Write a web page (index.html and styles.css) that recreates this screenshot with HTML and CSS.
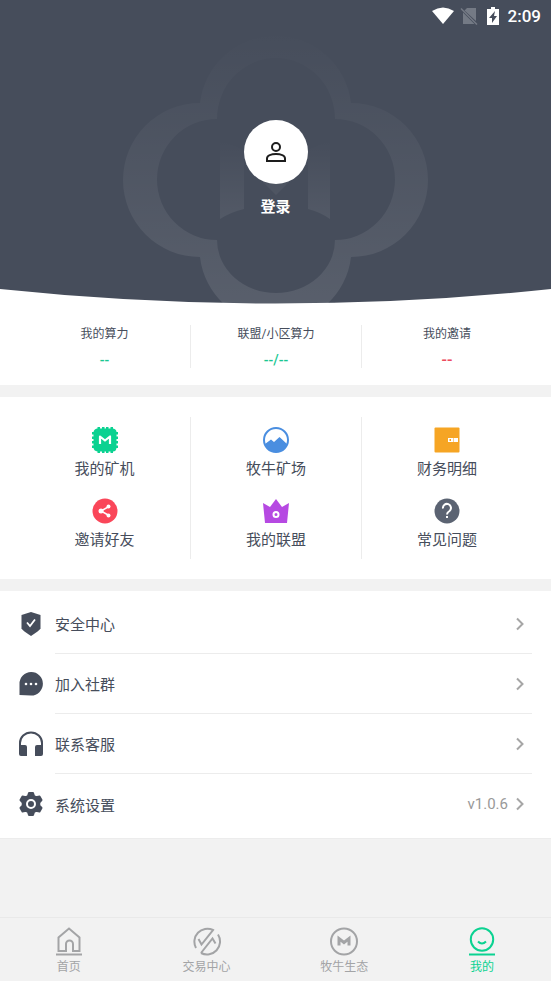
FILE: index.html
```html
<!DOCTYPE html>
<html lang="zh-CN">
<head>
<meta charset="utf-8">
<meta name="viewport" content="width=device-width, initial-scale=1">
<title>我的</title>
<link rel="stylesheet" href="styles.css">
</head>
<body>
<div class="app">
  <header class="hero">
    <svg class="hero-mark" viewBox="0 0 551 304" preserveAspectRatio="xMidYMin slice" aria-hidden="true">
      <defs>
        <linearGradient id="ring" gradientUnits="userSpaceOnUse" x1="0" y1="27" x2="0" y2="304">
          <stop offset="0" stop-color="#fff" stop-opacity="0"/>
          <stop offset="1" stop-color="#fff" stop-opacity=".1"/>
        </linearGradient>
        <linearGradient id="bars" gradientUnits="userSpaceOnUse" x1="0" y1="140" x2="0" y2="219">
          <stop offset="0" stop-color="#fff" stop-opacity="0"/>
          <stop offset="1" stop-color="#fff" stop-opacity=".07"/>
        </linearGradient>
      </defs>
      <path fill="url(#ring)" fill-rule="evenodd" d="M200 103A77 77 0 0 0 200 257A76 76 0 0 0 351 257A77 77 0 0 0 351 103A76 76 0 0 0 200 103ZM217 119A60 60.500 0 0 0 217 240A59 53 0 0 0 335 240A60 60.500 0 0 0 335 119A59 61 0 0 0 217 119Z"/>
      <path fill="url(#bars)" d="M220 140L244 150V209Q231 212 220 219ZM330 140L308 150V209Q320 212 330 219ZM262 181H290L276 195Z"/>
    </svg>
    <svg class="hero-curve" viewBox="0 0 551 15" preserveAspectRatio="none" aria-hidden="true"><path fill="#fff" d="M0 0Q275.500 29 551 0V15H0Z"/></svg>
    <div class="status">
      <svg width="22" height="18" viewBox="0 0 22 18" aria-hidden="true"><path fill="#fff" d="M0 4Q11-3 22 4L11 17Z"/></svg>
      <svg class="nosim" width="18" height="18" viewBox="0 0 18 18" aria-hidden="true"><path fill="#747a85" d="M7 1H16V14L4.500 3.500ZM3 5.500L14.500 17H3Z"/><path stroke="#747a85" stroke-width="1.500" d="M1 1.500L17 17.500"/></svg>
      <svg width="12" height="18" viewBox="0 0 12 18" aria-hidden="true"><path fill="#fff" fill-rule="evenodd" d="M4 0H8V2H12V18H0V2H4ZM8 4L2 11H5V16L10 9H7Z"/></svg>
      <span class="clock">2:09</span>
    </div>
    <button class="login" type="button">
      <span class="avatar">
        <svg width="20" height="20" viewBox="0 0 20 20" fill="none" stroke="#1d1d1d" stroke-width="2" aria-hidden="true"><circle cx="10" cy="5" r="4"/><path d="M1 19V16.500C1 13.500 5.500 12 10 12S19 13.500 19 16.500V19Z"/></svg>
      </span>
      <span>登录</span>
    </button>
  </header>

  <main>
    <section class="stats">
      <div class="stat"><span>我的算力</span><strong>--</strong></div>
      <div class="stat"><span>联盟/小区算力</span><strong>--/--</strong></div>
      <div class="stat"><span>我的邀请</span><strong class="red">--</strong></div>
    </section>

    <nav class="grid" aria-label="功能">
      <div class="col">
        <a href="#miner"><svg width="26" height="26" viewBox="0 0 26 26" aria-hidden="true"><path fill="#0bd291" d="M5 1.500H5.500V0H8V1.500H10V0H12.500V1.500H14V0H16.500V1.500H18.500V0H21V1.500Q24.500 2 24.500 5H26V7.500H24.500V9.500H26V12H24.500V14H26V16.500H24.500V18.500H26V21H24.500Q24 24.500 21 24.500V26H18.500V24.500H16.500V26H14V24.500H12.500V26H10V24.500H8V26H5.500V24.500Q2 24 1.500 21H0V18.500H1.500V16.500H0V14H1.500V12H0V9.500H1.500V7.500H0V5H1.500Q2 2 5 1.500Z"/><path fill="none" stroke="#fff" stroke-width="2.200" stroke-linejoin="round" d="M8 17V9.500L13 13.500L18 9.500V17"/></svg><span>我的矿机</span></a>
        <a href="#invite"><svg width="26" height="26" viewBox="0 0 26 26" aria-hidden="true"><circle cx="13" cy="13" r="12.500" fill="#fa4659"/><path stroke="#fff" stroke-width="1.500" fill="none" d="M17 8.500L9 13L17 17.500"/><circle cx="9" cy="13" r="2.500" fill="#fff"/><circle cx="16.500" cy="8.500" r="2" fill="#fff"/><circle cx="16.500" cy="17.500" r="2" fill="#fff"/></svg><span>邀请好友</span></a>
      </div>
      <div class="col">
        <a href="#field"><svg width="26" height="26" viewBox="0 0 26 26" aria-hidden="true"><circle cx="13" cy="13" r="12" fill="#fff" stroke="#4a8ee0" stroke-width="2"/><path fill="#4a8ee0" d="M2 17L8 12.500L11 15L16.500 10L24 17Q21 25 13 25T2 17Z"/></svg><span>牧牛矿场</span></a>
        <a href="#union"><svg width="26" height="26" viewBox="0 0 26 26" aria-hidden="true"><path fill="#b649e2" d="M0 5L7 9L13 1L19 9L26 5L24 25H2Z"/><circle cx="13" cy="16.500" r="2.500" fill="none" stroke="#fff" stroke-width="2"/></svg><span>我的联盟</span></a>
      </div>
      <div class="col">
        <a href="#finance"><svg width="26" height="26" viewBox="0 0 26 26" aria-hidden="true"><rect x=".5" y=".5" width="25" height="25" rx="1" fill="#f6a524"/><path fill="#fff" d="M14 11H24V15H14Z"/><path fill="#f6a524" d="M15.500 12H17V14H15.500ZM19 11H19.500V15H19Z"/></svg><span>财务明细</span></a>
        <a href="#faq"><svg width="26" height="26" viewBox="0 0 26 26" aria-hidden="true"><circle cx="13" cy="13" r="12.500" fill="#5b6372"/><path fill="none" stroke="#fff" stroke-width="2" d="M9 10.500A4 4 0 1 1 15.500 13C13.500 14.200 13 15 13 16.500"/><path fill="#fff" d="M12 18H14V20H12Z"/></svg><span>常见问题</span></a>
      </div>
    </nav>

    <nav class="list" aria-label="设置">
      <a class="row" href="#security">
        <svg width="26" height="26" viewBox="0 0 26 26" aria-hidden="true"><path fill="#464d5b" d="M13 1L22.500 4V17.500Q22 19 13 25Q4 19 3.500 17.500V4Z"/><path fill="none" stroke="#fff" stroke-width="1.800" d="M9 11.500L12 15L17 8.500"/></svg>
        <span class="body"><span>安全中心</span><svg class="chev" width="8" height="14" viewBox="0 0 8 14" aria-hidden="true"><path d="M1 1.500L6.500 7L1 12.500"/></svg></span>
      </a>
      <a class="row" href="#group">
        <svg width="26" height="26" viewBox="0 0 26 26" aria-hidden="true"><path fill="#464d5b" d="M1.500 24V13A11.700 11.700 0 1 1 13 24.500Z"/><g fill="#fff"><circle cx="8" cy="13" r="1.300"/><circle cx="13" cy="13" r="1.300"/><circle cx="18" cy="13" r="1.300"/></g></svg>
        <span class="body"><span>加入社群</span><svg class="chev" width="8" height="14" viewBox="0 0 8 14" aria-hidden="true"><path d="M1 1.500L6.500 7L1 12.500"/></svg></span>
      </a>
      <a class="row" href="#service">
        <svg width="26" height="26" viewBox="0 0 26 26" aria-hidden="true"><path fill="none" stroke="#464d5b" stroke-width="2" d="M2 20V12A11 10.500 0 0 1 24 12V20"/><path fill="#464d5b" d="M1 14H7Q9 14 9 16V25H3Q1 25 1 23ZM25 14H19Q17 14 17 16V25H23Q25 25 25 23Z"/></svg>
        <span class="body"><span>联系客服</span><svg class="chev" width="8" height="14" viewBox="0 0 8 14" aria-hidden="true"><path d="M1 1.500L6.500 7L1 12.500"/></svg></span>
      </a>
      <a class="row" href="#settings">
        <svg width="26" height="26" viewBox="0 0 26 26" aria-hidden="true"><path fill="#464d5b" stroke="#464d5b" stroke-width="2" stroke-linejoin="round" d="M11 2H15L16 5L18 6.200L21.500 5.500L23.500 9L21.300 11.500V14.500L23.500 17L21.500 20.500L18 19.800L16 21L15 24H11L10 21L8 19.800L4.500 20.500L2.500 17L4.700 14.500V11.500L2.500 9L4.500 5.500L8 6.200L10 5Z"/><circle cx="13" cy="13" r="4" fill="none" stroke="#fff" stroke-width="2"/></svg>
        <span class="body"><span>系统设置</span><span class="version">v1.0.6</span><svg class="chev" width="8" height="14" viewBox="0 0 8 14" aria-hidden="true"><path d="M1 1.500L6.500 7L1 12.500"/></svg></span>
      </a>
    </nav>
  </main>

  <nav class="tabs" aria-label="主导航">
    <a href="#home"><svg width="30" height="30" viewBox="0 0 30 30" aria-hidden="true"><path d="M4.500 25V11.500L15 2.500L25.500 11.500V25H19V18A3.500 3.500 0 0 0 12 18V25ZM2 28.500H28"/></svg><span>首页</span></a>
    <a href="#trade"><svg width="30" height="30" viewBox="0 0 30 30" aria-hidden="true"><path d="M4 22A13 13 0 0 1 21 4L9.500 18.500L6.500 13M9 27L20.500 12.500L23.500 17.500M9 27A13 13 0 0 0 26 8.500"/></svg><span>交易中心</span></a>
    <a href="#eco"><svg width="30" height="30" viewBox="0 0 30 30" aria-hidden="true"><circle cx="15" cy="15.500" r="13"/><path class="bold" d="M10 19.500V12.500L15 16.500L20 12.500V19.500"/></svg><span>牧牛生态</span></a>
    <a class="on" href="#me" aria-current="page"><svg width="30" height="30" viewBox="0 0 30 30" aria-hidden="true"><circle cx="15" cy="13.500" r="11.200"/><path d="M11 15.500Q15 19.500 19 15.500M2 28.500H28"/></svg><span>我的</span></a>
  </nav>
</div>
</body>
</html>
```

FILE: styles.css
```css
* {
  box-sizing: border-box;
}

body {
  margin: 0;
  background: #f2f2f2;
  color: #464d5b;
  font-family: Roboto, "Noto Sans CJK SC", sans-serif;
  font-size: 15px;
}

a {
  color: inherit;
  text-decoration: none;
}

svg {
  display: block;
  flex: none;
}

.app {
  display: flex;
  flex-direction: column;
  min-height: 100vh;
}

main {
  flex: 1;
}

.hero {
  position: relative;
  display: flex;
  flex-direction: column;
  align-items: center;
  height: 304px;
  background: #464d5b;
  color: #fff;
}

.hero-mark {
  position: absolute;
  inset: 0;
  width: 100%;
  height: 100%;
}

.hero-curve {
  position: absolute;
  left: 0;
  bottom: 0;
  width: 100%;
  height: 15px;
}

.status {
  position: relative;
  display: flex;
  align-self: stretch;
  align-items: center;
  justify-content: flex-end;
  height: 31px;
  padding-right: 10px;
}

.nosim {
  margin: 0 9px 0 6px;
}

.clock {
  margin-left: 9px;
  font-size: 17px;
  font-weight: 500;
}

.login {
  position: relative;
  display: flex;
  flex-direction: column;
  align-items: center;
  gap: 12px;
  margin-top: 89px;
  padding: 0;
  border: 0;
  background: none;
  color: #fff;
  font: bold 15px/22px Roboto, "Noto Sans CJK SC", sans-serif;
}

.avatar {
  display: grid;
  place-items: center;
  width: 64px;
  height: 64px;
  border-radius: 50%;
  background: #fff;
}

.stats,
.grid {
  display: grid;
  grid-template-columns: repeat(3, 1fr);
  margin-bottom: 12px;
  background: #fff;
}

.stats {
  padding: 21px 19px 17px;
}

.stat {
  display: flex;
  flex-direction: column;
  align-items: center;
  gap: 8px;
  height: 43px;
  font-size: 12px;
  line-height: 18px;
}

.stat + .stat,
.col + .col {
  border-left: 1px solid #ececec;
}

.stat strong {
  color: #19c792;
  font-size: 14px;
  font-weight: 500;
}

.stat .red {
  color: #ed4b60;
  font-size: 16px;
}

.grid {
  padding: 20px 19px;
}

.col {
  display: grid;
  gap: 17px;
  padding: 10px 0 7px;
}

.col a {
  display: flex;
  flex-direction: column;
  align-items: center;
  gap: 4px;
  line-height: 24px;
}

.list {
  padding: 3px 19px 4px 18px;
  background: #fff;
  border-bottom: 1px solid #ececec;
}

.row {
  display: flex;
  align-items: center;
  gap: 11px;
  height: 60px;
}

.body {
  display: flex;
  flex: 1;
  align-items: center;
  gap: 8px;
  height: 60px;
  padding-right: 8px;
  border-bottom: 1px solid #ececec;
}

.row:last-child .body {
  border-bottom: 0;
}

.body > :first-child {
  flex: 1;
}

.version {
  color: #999;
}

.chev {
  fill: none;
  stroke: #a6a6a6;
  stroke-width: 2;
}

.tabs {
  display: grid;
  grid-template-columns: repeat(4, 1fr);
  height: 64px;
  padding-top: 8px;
  border-top: 1px solid #e9e9e9;
  color: #a3a4a6;
  font-size: 12px;
  line-height: 18px;
}

.tabs a {
  display: flex;
  flex-direction: column;
  align-items: center;
  gap: 2px;
}

.tabs svg {
  fill: none;
  stroke: currentColor;
  stroke-width: 2;
}

.tabs .bold {
  stroke-width: 3;
}

.tabs .on {
  color: #0bd291;
}
```
